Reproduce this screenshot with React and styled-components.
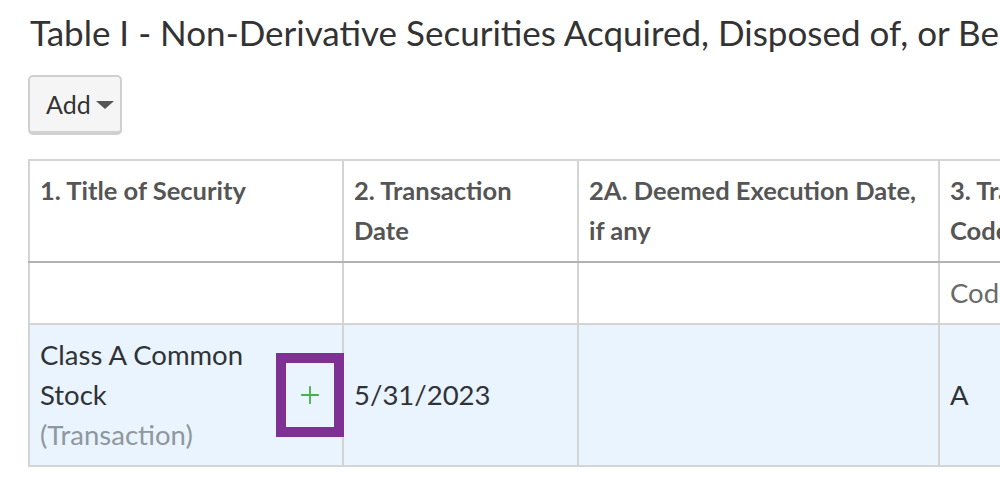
import styled, { createGlobalStyle } from "styled-components";
import { Plus } from "lucide-react";

const GlobalStyle = createGlobalStyle`
  html, body {
    margin: 0;
    padding: 0;
    background: #fff;
    overflow: hidden;
  }
  body {
    font-family: Lato, "Open Sans", sans-serif;
    color: #333;
  }
`;

const Page = styled.div`
  padding: 10px 0 0 28px;
  width: 1600px;
`;

const Heading = styled.h2`
  margin: 0 0 0 2px;
  font-size: 35px;
  font-weight: 400;
  line-height: 44px;
  color: #333;
  white-space: nowrap;
`;

const Toolbar = styled.div`
  display: flex;
  margin: 21px 0 24px 0;
`;

const DropButton = styled.button`
  display: flex;
  align-items: center;
  gap: 5px;
  height: 60px;
  padding: 0 6px 0 16px;
  width: 94px;
  font-family: Lato, sans-serif;
  font-size: 25px;
  color: #333;
  background: #f5f5f5;
  border: 2px solid #d0d0d0;
  border-bottom-width: 4px;
  border-radius: 5px;
  cursor: pointer;
`;

const Caret = styled.span`
  width: 0;
  height: 0;
  margin-top: 2px;
  border-left: 9px solid transparent;
  border-right: 9px solid transparent;
  border-top: 8px solid #555;
`;

const Table = styled.table`
  border-collapse: collapse;
  table-layout: fixed;
  width: 1500px;
  font-size: 27.5px;
  line-height: 40px;
`;

const Th = styled.th`
  text-align: left;
  vertical-align: top;
  font-size: 25.5px;
  font-weight: 700;
  color: #555;
  padding: 9px 10px 11px;
  border: 2px solid #d4d4d4;
  border-bottom-color: #b2b2b2;
`;

const Td = styled.td`
  vertical-align: top;
  padding: 10px 10px;
  border: 2px solid #d4d4d4;
  color: ${(p) => (p.$muted ? "#6a6a6a" : "#2f3337")};
  background: ${(p) => (p.$active ? "#eaf4fe" : "transparent")};
`;

const MidTd = styled(Td)`
  vertical-align: middle;
`;

const SecurityCell = styled.div`
  display: flex;
  align-items: center;
  justify-content: space-between;
  margin-right: -2px;
`;

const SecurityName = styled.div`
  width: 230px;
`;

const Note = styled.div`
  color: #8f979f;
`;

const PlusButton = styled.button`
  flex: none;
  display: flex;
  align-items: center;
  justify-content: center;
  width: 48px;
  height: 64px;
  border: none;
  background: transparent;
  outline: 10px solid #7f3193;
  color: #45b04c;
  padding: 0;
  cursor: pointer;
`;

const columns = [
  { w: 314, label: "1. Title of Security" },
  { w: 235, label: "2. Transaction Date" },
  { w: 361, label: "2A. Deemed Execution Date, if any" },
  { w: 200, label: "3. Transaction Code (Instr. 8)" },
  { w: 390, label: "4. Securities Acquired (A) or Disposed Of (D)" },
];

export default function App() {
  return (
    <>
      <GlobalStyle />
      <Page>
        <Heading>
          Table I - Non-Derivative Securities Acquired, Disposed of, or Beneficially Owned
        </Heading>
        <Toolbar>
          <DropButton>
            Add <Caret />
          </DropButton>
        </Toolbar>
        <Table>
          <colgroup>
            {columns.map((c) => (
              <col key={c.label} style={{ width: c.w }} />
            ))}
          </colgroup>
          <thead>
            <tr>
              {columns.map((c) => (
                <Th key={c.label}>{c.label}</Th>
              ))}
            </tr>
          </thead>
          <tbody>
            <tr>
              <Td />
              <Td />
              <Td />
              <Td $muted>Code</Td>
              <Td $muted>Amount</Td>
            </tr>
            <tr>
              <Td $active>
                <SecurityCell>
                  <SecurityName>
                    Class A Common Stock
                    <Note>(Transaction)</Note>
                  </SecurityName>
                  <PlusButton>
                    <Plus size={28} strokeWidth={1.6} />
                  </PlusButton>
                </SecurityCell>
              </Td>
              <MidTd $active>5/31/2023</MidTd>
              <MidTd $active />
              <MidTd $active>A</MidTd>
              <MidTd $active>1,000</MidTd>
            </tr>
          </tbody>
        </Table>
      </Page>
    </>
  );
}
